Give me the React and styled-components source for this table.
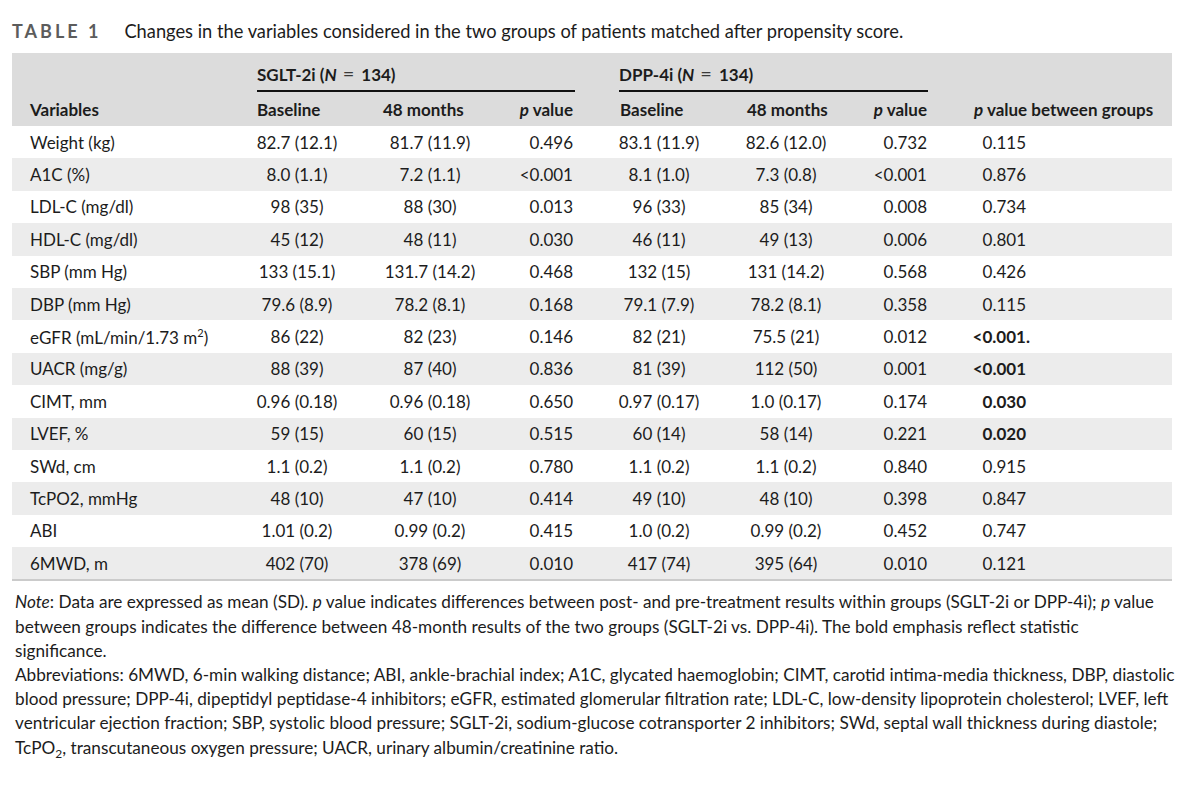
import styled, { createGlobalStyle } from 'styled-components';

const GlobalStyle = createGlobalStyle`
  body {
    margin: 0;
    background: #ffffff;
    color: #1c1c1c;
    font-family: Lato, "Open Sans", sans-serif;
  }
`;

// column widths, the band runs from x=12 to x=1172
const COLS = '233px 115px 140px 80px 140px 130px 85px 237px';

// where each column's header and values sit inside its cell
const columns = [
  { head: 'left', headPad: '0 0 0 18px', cell: 'left', cellPad: '0 0 0 18px' },
  { head: 'left', headPad: '0 0 0 12px', cell: 'center', cellPad: '0 11px 0 0' },
  { head: 'left', headPad: '0 0 0 23px', cell: 'center', cellPad: '0' },
  { head: 'right', headPad: '0 7px 0 0', cell: 'right', cellPad: '0 7px 0 0' },
  { head: 'left', headPad: '0 0 0 40px', cell: 'center', cellPad: '0 0 0 18px' },
  { head: 'left', headPad: '0 0 0 27px', cell: 'center', cellPad: '0 0 0 2px' },
  { head: 'right', headPad: '0 8px 0 0', cell: 'right', cellPad: '0 8px 0 0' },
  { head: 'left', headPad: '0 0 0 39px', cell: 'right', cellPad: '0 146px 0 0' },
];

const Page = styled.div`
  padding: 19px 12px 30px 12px;
  width: 1160px;
`;

const Caption = styled.div`
  display: flex;
  align-items: baseline;
  gap: 23px;
  height: 24px;
  line-height: 24px;
  margin-bottom: 10px;
`;

const Label = styled.span`
  font-size: 18px;
  font-weight: 700;
  letter-spacing: 3px;
  color: #5c5c5c;
`;

const CaptionText = styled.span`
  font-size: 18.3px;
  color: #1c1c1c;
`;

const Band = styled.div`
  background: #dcdcdc;
`;

const GroupRow = styled.div`
  display: grid;
  grid-template-columns: ${COLS};
  height: 39px;
`;

const Group = styled.div`
  grid-column: ${(p) => p.$from} / span 3;
  margin: ${(p) => p.$margin};
  border-bottom: 2px solid #111;
  font-size: 17px;
  font-weight: 700;
  line-height: 20px;
  padding-top: 10px;
  white-space: nowrap;
`;

const Equals = styled.span`
  display: inline-block;
  font-weight: 400;
  font-size: 20px;
  color: #3a3a3a;
  margin: 0 7px 0 6px;
`;

const HeadRow = styled.div`
  display: grid;
  grid-template-columns: ${COLS};
  height: 34px;
  align-items: center;
`;

const HeadCell = styled.div`
  font-size: 17px;
  font-weight: 700;
  white-space: nowrap;
  text-align: ${(p) => p.$align};
  padding: ${(p) => p.$pad};
`;

const Row = styled.div`
  display: grid;
  grid-template-columns: ${COLS};
  height: 32.4px;
  align-items: center;
  background: ${(p) => (p.$striped ? '#ececec' : '#ffffff')};
`;

const Cell = styled.div`
  font-size: 17px;
  white-space: nowrap;
  font-weight: ${(p) => (p.$bold ? 700 : 400)};
  text-align: ${(p) => p.$align};
  padding: ${(p) => p.$pad};
`;

const BandEnd = styled.div`
  height: 2px;
  background: #cbcbcb;
`;

const Notes = styled.div`
  margin-top: 9px;
  padding-left: 3px;
  font-size: 17.2px;
  line-height: 24.2px;
  white-space: nowrap;
`;

const Overhang = styled.span`
  margin-right: -4px;
`;

const rows = [
  ['Weight (kg)', '82.7 (12.1)', '81.7 (11.9)', '0.496', '83.1 (11.9)', '82.6 (12.0)', '0.732', '0.115'],
  ['A1C (%)', '8.0 (1.1)', '7.2 (1.1)', '<0.001', '8.1 (1.0)', '7.3 (0.8)', '<0.001', '0.876'],
  ['LDL-C (mg/dl)', '98 (35)', '88 (30)', '0.013', '96 (33)', '85 (34)', '0.008', '0.734'],
  ['HDL-C (mg/dl)', '45 (12)', '48 (11)', '0.030', '46 (11)', '49 (13)', '0.006', '0.801'],
  ['SBP (mm Hg)', '133 (15.1)', '131.7 (14.2)', '0.468', '132 (15)', '131 (14.2)', '0.568', '0.426'],
  ['DBP (mm Hg)', '79.6 (8.9)', '78.2 (8.1)', '0.168', '79.1 (7.9)', '78.2 (8.1)', '0.358', '0.115'],
  [<>eGFR (mL/min/1.73 m<sup style={{ fontSize: '11px' }}>2</sup>)</>, '86 (22)', '82 (23)', '0.146', '82 (21)', '75.5 (21)', '0.012', <>{'<0.001'}<Overhang>.</Overhang></>, true],
  ['UACR (mg/g)', '88 (39)', '87 (40)', '0.836', '81 (39)', '112 (50)', '0.001', '<0.001', true],
  ['CIMT, mm', '0.96 (0.18)', '0.96 (0.18)', '0.650', '0.97 (0.17)', '1.0 (0.17)', '0.174', '0.030', true],
  ['LVEF, %', '59 (15)', '60 (15)', '0.515', '60 (14)', '58 (14)', '0.221', '0.020', true],
  ['SWd, cm', '1.1 (0.2)', '1.1 (0.2)', '0.780', '1.1 (0.2)', '1.1 (0.2)', '0.840', '0.915'],
  ['TcPO2, mmHg', '48 (10)', '47 (10)', '0.414', '49 (10)', '48 (10)', '0.398', '0.847'],
  ['ABI', '1.01 (0.2)', '0.99 (0.2)', '0.415', '1.0 (0.2)', '0.99 (0.2)', '0.452', '0.747'],
  ['6MWD, m', '402 (70)', '378 (69)', '0.010', '417 (74)', '395 (64)', '0.010', '0.121'],
];

const PValue = ({ rest }) => (
  <>
    <i>p</i> value{rest}
  </>
);

const heads = [
  'Variables',
  'Baseline',
  '48 months',
  <PValue />,
  'Baseline',
  '48 months',
  <PValue />,
  <PValue rest=" between groups" />,
];

function App() {
  return (
    <Page>
      <GlobalStyle />
      <Caption>
        <Label>TABLE 1</Label>
        <CaptionText>
          Changes in the variables considered in the two groups of patients matched after propensity score.
        </CaptionText>
      </Caption>

      <Band>
        <GroupRow>
          <Group $from={2} $margin="0 5px 0 12px">
            SGLT-2i (<i>N</i><Equals>=</Equals>134)
          </Group>
          <Group $from={5} $margin="0 7px 0 39px">
            DPP-4i (<i>N</i><Equals>=</Equals>134)
          </Group>
        </GroupRow>
        <HeadRow>
          {heads.map((h, i) => (
            <HeadCell key={i} $align={columns[i].head} $pad={columns[i].headPad}>
              {h}
            </HeadCell>
          ))}
        </HeadRow>
      </Band>

      {rows.map((r, ri) => (
        <Row key={ri} $striped={ri % 2 === 1}>
          {r.slice(0, 8).map((v, i) => (
            <Cell
              key={i}
              $align={columns[i].cell}
              $pad={columns[i].cellPad}
              $bold={i === 7 && r[8]}
            >
              {v}
            </Cell>
          ))}
        </Row>
      ))}
      <BandEnd />

      <Notes>
        <i>Note</i>: Data are expressed as mean (SD). <i>p</i> value indicates differences between post- and
        pre-treatment results within groups (SGLT-2i or DPP-4i); <i>p</i> value
        <br />
        between groups indicates the difference between 48-month results of the two groups (SGLT-2i vs.
        DPP-4i). The bold emphasis reflect statistic
        <br />
        significance.
        <br />
        Abbreviations: 6MWD, 6-min walking distance; ABI, ankle-brachial index; A1C, glycated haemoglobin;
        CIMT, carotid intima-media thickness, DBP, diastolic
        <br />
        blood pressure; DPP-4i, dipeptidyl peptidase-4 inhibitors; eGFR, estimated glomerular filtration
        rate; LDL-C, low-density lipoprotein cholesterol; LVEF, left
        <br />
        ventricular ejection fraction; SBP, systolic blood pressure; SGLT-2i, sodium-glucose cotransporter 2
        inhibitors; SWd, septal wall thickness during diastole;
        <br />
        TcPO<sub style={{ fontSize: '12px', lineHeight: 0 }}>2</sub>, transcutaneous oxygen pressure; UACR,
        urinary albumin/creatinine ratio.
      </Notes>
    </Page>
  );
}

export default App;
